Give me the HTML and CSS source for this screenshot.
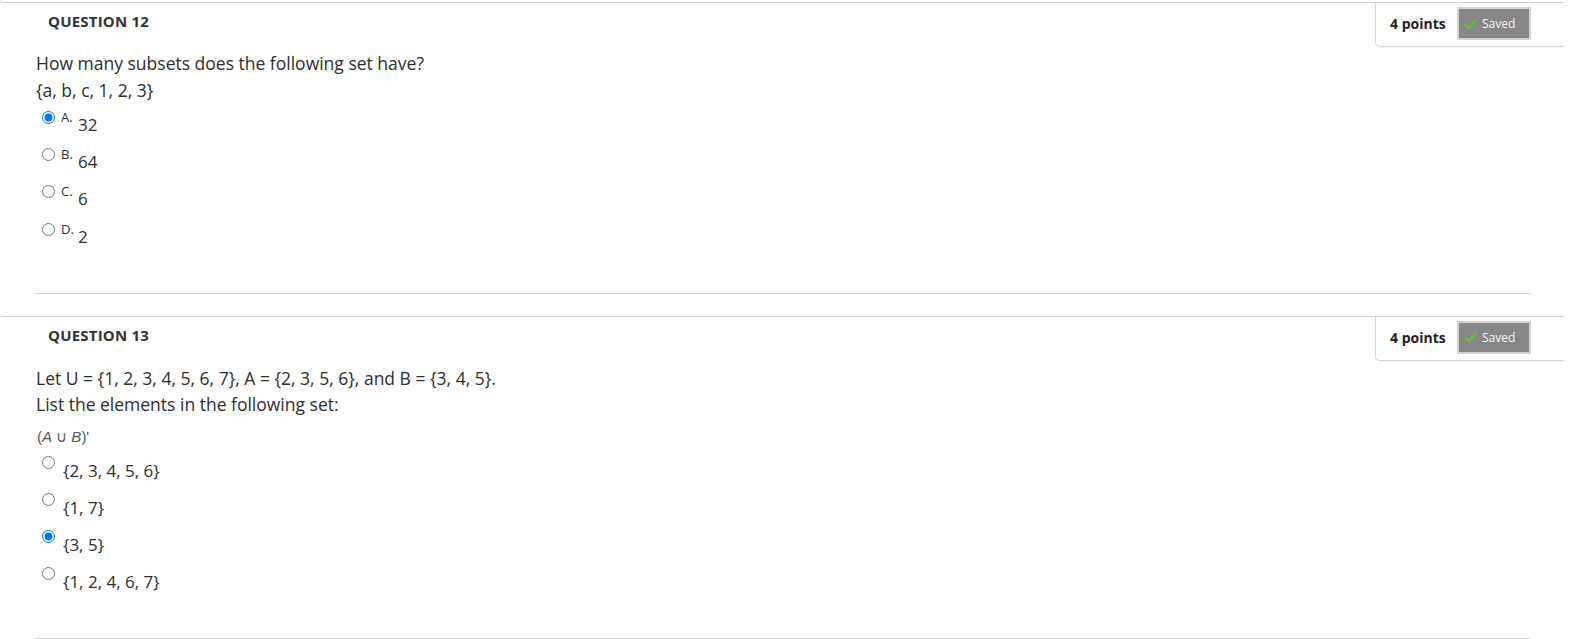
FILE: index.html
```html
<!DOCTYPE html>
<html>
<head>
<meta charset="utf-8">
<link rel="stylesheet" href="styles.css">
</head>
<body>
<div class="page">
  <section class="question q12">
    <div class="q-head">
      <h3 class="q-title">QUESTION 12</h3>
      <div class="points">
        <span class="pts">4 points</span>
        <span class="saved"><svg class="check" width="13" height="11" viewBox="0 0 13 11"><path d="M1.5 6 L4.8 9.2 L11.5 1.8" fill="none" stroke="#5fbf3f" stroke-width="2.4" stroke-linecap="round" stroke-linejoin="round"/></svg>Saved</span>
      </div>
    </div>
    <div class="q-body">
      <div class="prompt">
        <p>How many subsets does the following set have?</p>
        <p>{a, b, c, 1, 2, 3}</p>
      </div>
      <ul class="options lettered">
        <li><input type="radio" name="q12" checked><span class="letter">A.</span><span class="ans">32</span></li>
        <li><input type="radio" name="q12"><span class="letter">B.</span><span class="ans">64</span></li>
        <li><input type="radio" name="q12"><span class="letter">C.</span><span class="ans">6</span></li>
        <li><input type="radio" name="q12"><span class="letter">D.</span><span class="ans">2</span></li>
      </ul>
    </div>
    <hr class="sep">
  </section>

  <section class="question q13">
    <div class="q-head">
      <h3 class="q-title">QUESTION 13</h3>
      <div class="points">
        <span class="pts">4 points</span>
        <span class="saved"><svg class="check" width="13" height="11" viewBox="0 0 13 11"><path d="M1.5 6 L4.8 9.2 L11.5 1.8" fill="none" stroke="#5fbf3f" stroke-width="2.4" stroke-linecap="round" stroke-linejoin="round"/></svg>Saved</span>
      </div>
    </div>
    <div class="q-body">
      <div class="prompt">
        <p>Let U = {1, 2, 3, 4, 5, 6, 7}, A = {2, 3, 5, 6}, and B = {3, 4, 5}.</p>
        <p>List the elements in the following set:</p>
        <p class="math">(<i>A</i> <span class="cup">∪</span> <i>B</i>)'</p>
      </div>
      <ul class="options plain">
        <li><input type="radio" name="q13"><span class="ans">{2, 3, 4, 5, 6}</span></li>
        <li><input type="radio" name="q13"><span class="ans">{1, 7}</span></li>
        <li><input type="radio" name="q13" checked><span class="ans">{3, 5}</span></li>
        <li><input type="radio" name="q13"><span class="ans">{1, 2, 4, 6, 7}</span></li>
      </ul>
    </div>
    <hr class="sep">
  </section>
</div>
</body>
</html>
```

FILE: styles.css
```css
html, body {
  margin: 0;
  padding: 0;
  background: #fff;
}

body {
  font-family: "Open Sans", "Noto Sans", sans-serif;
  color: #2e2e2e;
}

.page {
  padding-top: 2px;
  padding-left: 2px;
  width: 1562px;
}

.question {
  border-top: 1px solid #d2d2d2;
}

.q13 {
  margin-top: 22px;
}

.q-head {
  display: flex;
  justify-content: space-between;
  align-items: flex-start;
}

.q-title {
  margin: 0;
  padding: 8px 0 0 46px;
  font-size: 15px;
  line-height: 20px;
  font-weight: 700;
  letter-spacing: 0.2px;
  color: #333;
}

.points {
  box-sizing: border-box;
  width: 189px;
  height: 44px;
  border-left: 1px solid #d8d8d8;
  border-bottom: 1px solid #d8d8d8;
  border-bottom-left-radius: 5px;
  display: flex;
  align-items: flex-start;
  padding: 4px 0 0 14px;
  box-shadow: 0 1px 1px rgba(0,0,0,0.04);
}

.pts {
  font-size: 14px;
  font-weight: 700;
  line-height: 20px;
  margin-top: 7px;
  color: #222;
  width: 67px;
}

.saved {
  box-sizing: border-box;
  width: 74px;
  height: 33px;
  background: #878787;
  border: 2px solid #d3d3d3;
  color: #f4f4f4;
  font-size: 12px;
  line-height: 29px;
  display: flex;
  align-items: center;
  padding-left: 5px;
}

.check {
  margin-right: 5px;
  margin-top: 1px;
}

.q-body {
  padding-left: 34px;
}

.prompt {
  margin-top: 3px;
}

.q13 .prompt {
  margin-top: 4px;
}

.prompt p {
  margin: 0;
  font-size: 17.5px;
  line-height: 27px;
}

.q13 .prompt p {
  line-height: 26px;
}

.q13 .prompt p.math {
  font-family: "Liberation Sans", Arial, sans-serif;
  font-size: 15px;
  line-height: 20px;
  margin-top: 10px;
  color: #555;
  padding-left: 1px;
}

.math .cup {
  font-style: normal;
}

.options {
  list-style: none;
  margin: 0;
  padding: 0;
}

.q13 .options {
  margin-top: 2px;
}

.options li {
  display: flex;
  align-items: flex-start;
  height: 37.2px;
}

.options.plain li {
  height: 37px;
}

.options input[type="radio"] {
  margin: 7px 0 0 6px;
  width: 13px;
  height: 13px;
}

.options .letter {
  font-size: 13px;
  line-height: 16px;
  margin-top: 5px;
  margin-left: 6px;
  width: 17px;
}

.options .ans {
  font-size: 17px;
  line-height: 20px;
  margin-top: 11px;
}

.options.plain .ans {
  margin-left: 8px;
  margin-top: 12px;
}

.sep {
  border: 0;
  border-top: 1px solid #d2d2d2;
  height: 0;
  margin: 40px 0 0 33px;
  width: 1496px;
}

.q13 .sep {
  margin-top: 41px;
}
```
